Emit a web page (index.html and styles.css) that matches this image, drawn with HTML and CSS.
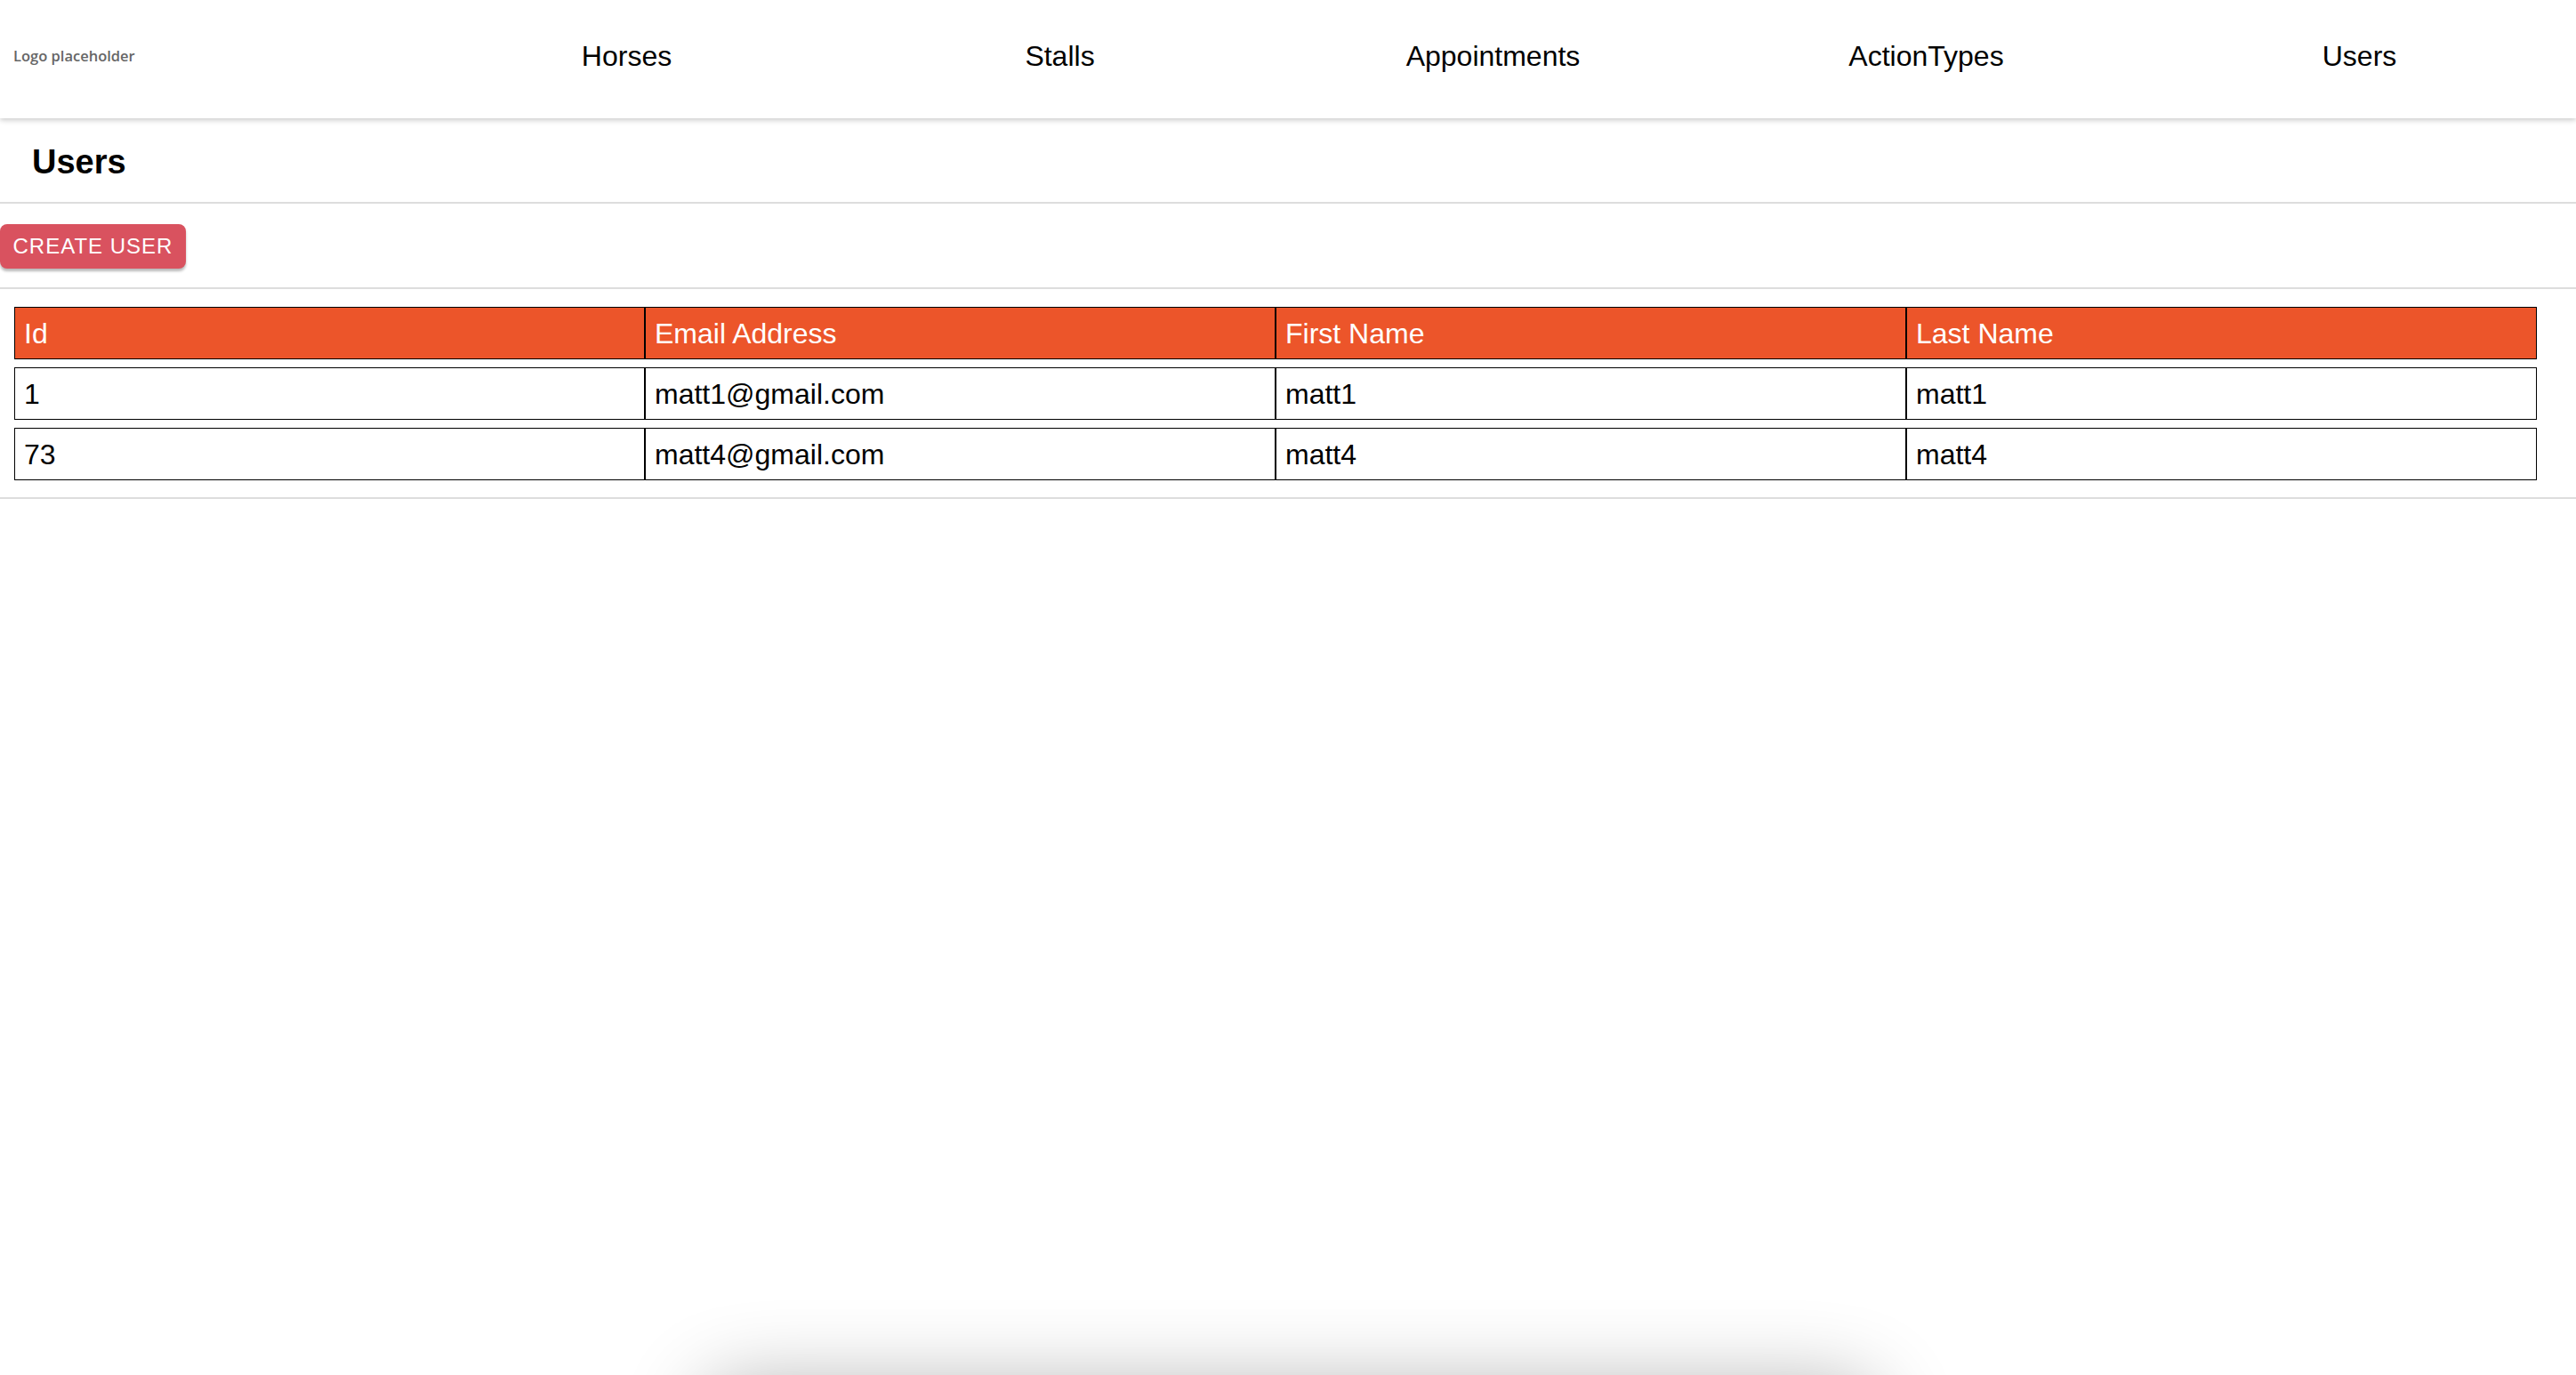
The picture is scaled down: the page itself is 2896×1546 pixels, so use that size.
FILE: index.html
```html
<!DOCTYPE html>
<html>
<head>
<meta charset="utf-8">
<title>Users</title>
<link rel="stylesheet" href="styles.css">
</head>
<body>
<header class="topbar">
  <div class="logo">Logo placeholder</div>
  <nav class="nav">
    <a class="nav-item">Horses</a>
    <a class="nav-item">Stalls</a>
    <a class="nav-item">Appointments</a>
    <a class="nav-item">ActionTypes</a>
    <a class="nav-item">Users</a>
  </nav>
</header>
<main>
  <section class="title-bar">
    <h2 class="page-title">Users</h2>
  </section>
  <section class="actions">
    <button class="btn-create">CREATE USER</button>
  </section>
  <section class="table-wrap">
    <table class="users">
      <thead>
        <tr><th>Id</th><th>Email Address</th><th>First Name</th><th>Last Name</th></tr>
      </thead>
      <tbody>
        <tr><td>1</td><td>matt1@gmail.com</td><td>matt1</td><td>matt1</td></tr>
        <tr><td>73</td><td>matt4@gmail.com</td><td>matt4</td><td>matt4</td></tr>
      </tbody>
    </table>
  </section>
</main>
<div class="bottom-sheet"></div>
</body>
</html>
```
FILE: styles.css
```css
html, body {
  margin: 0;
  padding: 0;
  background: #ffffff;
  font-family: "Liberation Sans", Arial, Helvetica, sans-serif;
  color: #000;
  overflow: hidden;
  height: 100%;
}

.topbar {
  height: 133px;
  display: flex;
  align-items: center;
  background: #fff;
  box-shadow: 0 2px 6px rgba(0, 0, 0, 0.22);
  position: relative;
  z-index: 2;
}

.logo {
  width: 461px;
  box-sizing: border-box;
  padding-left: 15px;
  font-family: "Open Sans", sans-serif;
  font-weight: 600;
  font-size: 16.5px;
  color: #666;
  margin-top: -8px;
}

.nav {
  flex: 1;
  display: grid;
  grid-template-columns: repeat(5, 1fr);
  align-items: center;
}

.nav-item {
  text-align: center;
  font-size: 32px;
  color: #000;
  text-decoration: none;
  margin-top: -7px;
}

.title-bar {
  height: 94px;
  display: flex;
  align-items: center;
  padding-left: 36px;
  border-bottom: 2px solid #dddddd;
}

.page-title {
  margin: 0;
  font-size: 38px;
  font-weight: bold;
  margin-top: 4px;
}

.actions {
  height: 94px;
  display: flex;
  align-items: center;
  border-bottom: 2px solid #dddddd;
}

.btn-create {
  height: 50px;
  width: 209px;
  margin-top: 2px;
  border: none;
  border-radius: 8px;
  background: #d9525f;
  color: #fff;
  font-family: "Liberation Sans", Arial, sans-serif;
  font-size: 24px;
  letter-spacing: 1px;
  padding: 0;
  box-shadow: 0 3px 3px rgba(0, 0, 0, 0.28);
}

.table-wrap {
  padding: 11px 0 10px 16px;
  border-bottom: 2px solid #dddddd;
}

.users {
  width: 2836px;
  border-collapse: separate;
  border-spacing: 0 9px;
  table-layout: fixed;
  margin: 0;
}

.users th,
.users td {
  border: 1px solid #000;
  height: 57px;
  padding: 0 10px;
  text-align: left;
  font-size: 32px;
  font-weight: normal;
  line-height: 36px;
  vertical-align: middle;
}

.users th {
  background: #ec552a;
  color: #fff;
}

.bottom-sheet {
  position: fixed;
  left: 790px;
  width: 1320px;
  top: 1556px;
  height: 120px;
  background: #fff;
  border-radius: 40px;
  box-shadow: 0 0 90px 0 rgba(0, 0, 0, 0.3);
}
```
